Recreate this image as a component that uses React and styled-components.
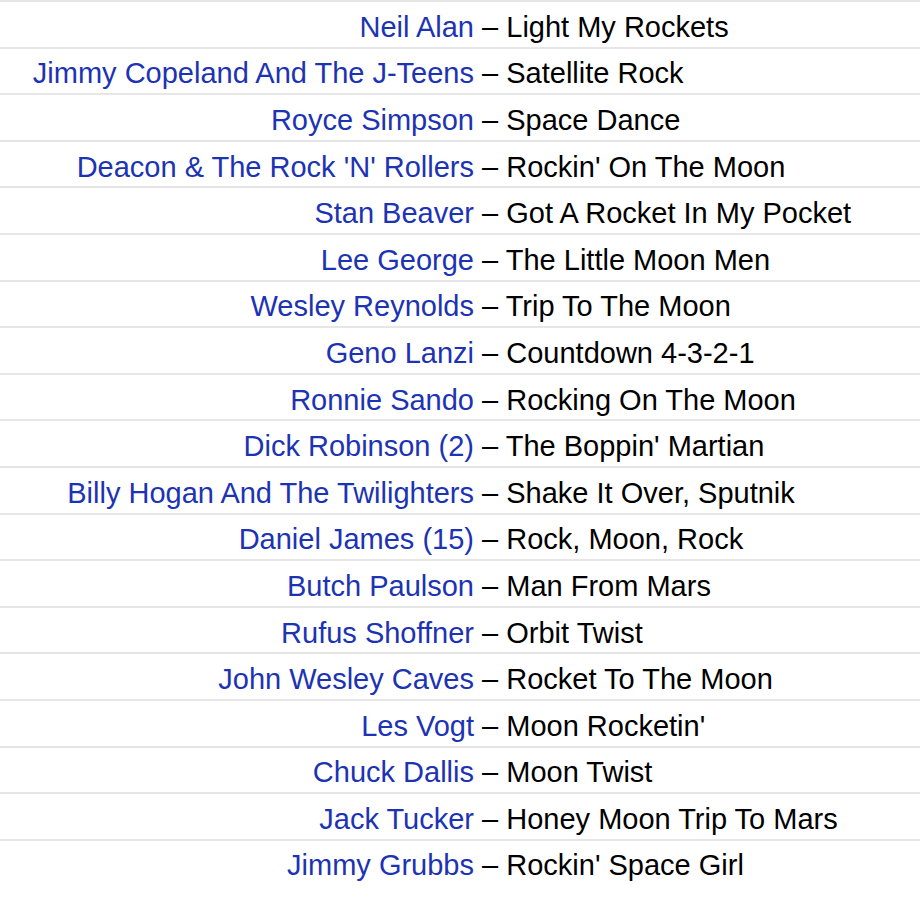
import React from "react";
import styled, { createGlobalStyle } from "styled-components";

const tracks = [
  ["Neil Alan", "Light My Rockets"],
  ["Jimmy Copeland And The J-Teens", "Satellite Rock"],
  ["Royce Simpson", "Space Dance"],
  ["Deacon & The Rock 'N' Rollers", "Rockin' On The Moon"],
  ["Stan Beaver", "Got A Rocket In My Pocket"],
  ["Lee George", "The Little Moon Men"],
  ["Wesley Reynolds", "Trip To The Moon"],
  ["Geno Lanzi", "Countdown 4-3-2-1"],
  ["Ronnie Sando", "Rocking On The Moon"],
  ["Dick Robinson (2)", "The Boppin' Martian"],
  ["Billy Hogan And The Twilighters", "Shake It Over, Sputnik"],
  ["Daniel James (15)", "Rock, Moon, Rock"],
  ["Butch Paulson", "Man From Mars"],
  ["Rufus Shoffner", "Orbit Twist"],
  ["John Wesley Caves", "Rocket To The Moon"],
  ["Les Vogt", "Moon Rocketin'"],
  ["Chuck Dallis", "Moon Twist"],
  ["Jack Tucker", "Honey Moon Trip To Mars"],
  ["Jimmy Grubbs", "Rockin' Space Girl"],
];

const GlobalStyle = createGlobalStyle`
  body {
    margin: 0;
    background: #fff;
    font-family: "Liberation Sans", Arial, Helvetica, sans-serif;
  }
`;

const List = styled.div`
  width: 920px;
`;

const Row = styled.div`
  box-sizing: border-box;
  height: 46.6px;
  border-top: 2px solid #e6e6e6;
  padding-top: 5px;
  display: flex;
  align-items: center;
  font-size: 29px;
  line-height: 32px;
  white-space: nowrap;
`;

const Artist = styled.a`
  width: 474px;
  flex: none;
  text-align: right;
  color: #1c33b4;
  text-decoration: none;
`;

const Title = styled.span`
  color: #000;
`;

export default function App() {
  return (
    <>
      <GlobalStyle />
      <List>
        {tracks.map(([artist, title]) => (
          <Row key={artist}>
            <Artist href="#">{artist}</Artist>
            <Title>&nbsp;– {title}</Title>
          </Row>
        ))}
      </List>
    </>
  );
}
